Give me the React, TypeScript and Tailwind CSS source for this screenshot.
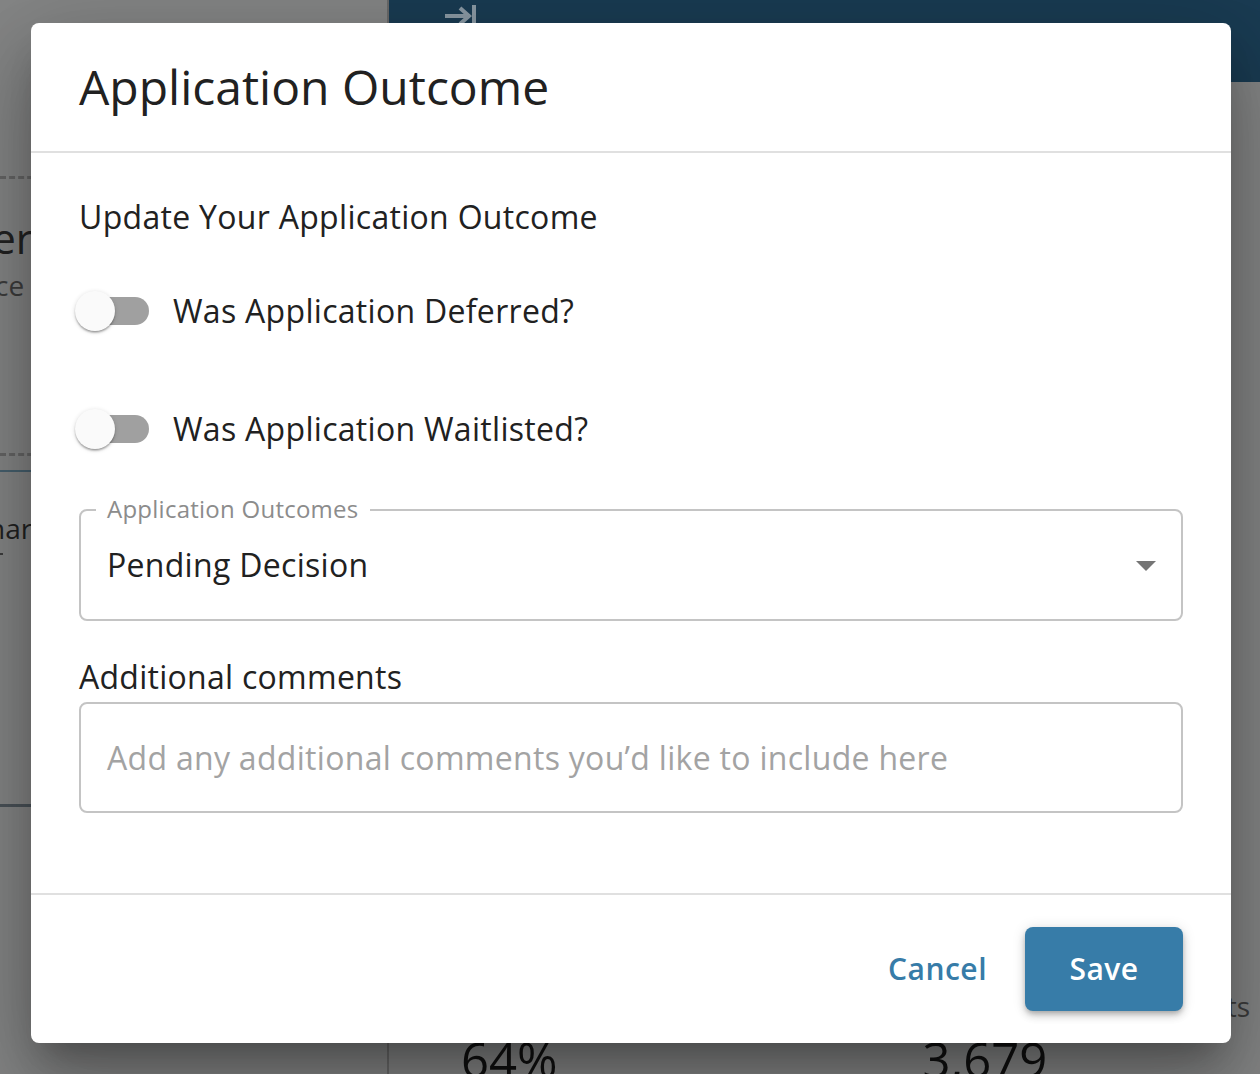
import React from "react";

function Toggle({ label }: { label: string }) {
  return (
    <div className="flex h-[40px] items-center">
      <div className="relative h-[28px] w-[71px] shrink-0 rounded-full bg-[#a0a0a0] ml-[-1px] mr-[24px]">
        <div className="absolute left-[-3px] top-[-6px] h-[40px] w-[40px] rounded-full bg-[#fafafa] shadow-[0_2px_2px_-1px_rgba(0,0,0,0.25),0_2px_2px_0_rgba(0,0,0,0.16),0_1px_5px_0_rgba(0,0,0,0.14)]" />
      </div>
      <span className="text-[32px] leading-[40px] tracking-[0.3px] text-[#212121]">{label}</span>
    </div>
  );
}

export default function App() {
  return (
    <div className="relative h-[1074px] w-[1260px] overflow-hidden bg-[#858686] font-['Open_Sans','Noto_Sans',sans-serif]">
      {/* page behind the modal */}
      <div className="flex h-full w-full">
        <div className="flex h-full w-[389px] shrink-0 flex-col overflow-hidden whitespace-nowrap border-r-2 border-[#6a6a6a]">
          <div className="mt-[176px] h-[3px] border-t-[3px] border-dashed border-[#666666]" />
          <div className="mt-[34px] ml-[-33px] text-[42px] leading-[50px] text-[#222222]">Per</div>
          <div className="mt-[4px] ml-[-12px] text-[28px] leading-[36px] text-[#3d3d3d]">ice</div>
          <div className="mt-[150px] h-[3px] border-t-[3px] border-dashed border-[#666666]" />
          <div className="mt-[14px] h-[2px] bg-[#47616f]" />
          <div className="mt-[38px] ml-[-12px] text-[28px] leading-[36px] text-[#222222]">har</div>
          <div className="mt-[7px] h-[2px] w-[3px] bg-[#3d3d3d]" />
          <div className="mt-[249px] h-[3px] bg-[#4b5359]" />
        </div>
        <div className="flex h-full min-w-0 flex-1 flex-col">
          <div className="flex h-[82px] shrink-0 items-start bg-[#1a3c53] pl-[55px] pt-[4px]">
            <svg width="33" height="24" viewBox="0 0 33 24" fill="none" stroke="#8c9ba6" strokeWidth="4">
              <path d="M1 12h24M16 4l9 8-9 8M30 1v22" />
            </svg>
          </div>
          <div className="flex-1" />
          <div className="flex h-[52px] shrink-0 justify-end pr-[10px] text-[28px] leading-[36px] text-[#3d3d3d]">
            <span>Results</span>
          </div>
          <div className="flex h-[34px] shrink-0 overflow-visible whitespace-nowrap text-[49px] leading-[38px] text-[#111111]">
            <span className="ml-[72px]">64%</span>
            <span className="ml-[365px]">3,679</span>
          </div>
        </div>
      </div>

      {/* modal */}
      <div className="absolute left-[31px] top-[23px] flex h-[1020px] w-[1200px] flex-col rounded-[8px] bg-white shadow-[0_22px_30px_-14px_rgba(0,0,0,0.25),0_48px_76px_6px_rgba(0,0,0,0.18),0_18px_92px_16px_rgba(0,0,0,0.16)]">
        <div className="flex h-[130px] shrink-0 items-center border-b-2 border-[#e0e0e0] px-[48px]">
          <h2 className="text-[48px] leading-[60px] text-[#212121]">Application Outcome</h2>
        </div>
        <div className="flex flex-1 flex-col px-[48px] pt-[43px]">
          <div className="text-[32px] leading-[42px] tracking-[0.3px] text-[#212121]">Update Your Application Outcome</div>
          <div className="mt-[53px]"><Toggle label="Was Application Deferred?" /></div>
          <div className="mt-[78px]"><Toggle label="Was Application Waitlisted?" /></div>
          <div className="relative mt-[60px] flex h-[112px] items-center rounded-[8px] border-2 border-[#c4c4c4] pl-[26px] pr-[24px]">
            <span className="absolute left-[15px] top-[-17px] bg-white px-[11px] text-[24px] leading-[30px] tracking-[0.25px] text-[#8c8c8c]">Application Outcomes</span>
            <span className="text-[32px] leading-[40px] tracking-[0.3px] text-[#212121]">Pending Decision</span>
            <svg className="ml-auto mt-[1px]" width="22" height="12" viewBox="0 0 22 12"><path d="M1 1h20L11 11z" fill="#757575" /></svg>
          </div>
          <div className="mt-[35px] text-[32px] leading-[42px] tracking-[0.27px] text-[#212121]">Additional comments</div>
          <div className="mt-[4px] flex h-[111px] items-center rounded-[8px] border-2 border-[#c4c4c4] pl-[26px]">
            <span className="text-[32px] leading-[40px] tracking-[0.3px] text-[#a3a3a3]">Add any additional comments you’d like to include here</span>
          </div>
        </div>
        <div className="flex h-[150px] shrink-0 items-center justify-end gap-[38px] border-t-2 border-[#e0e0e0] px-[48px]">
          <span className="text-[30px] font-[550] leading-[40px] tracking-[0.5px] text-[#377ca8] mt-[-1px]">Cancel</span>
          <div className="flex h-[84px] w-[158px] items-center justify-center rounded-[8px] bg-[#377ca8] text-[30px] font-[550] tracking-[0.5px] text-white shadow-[0_3px_5px_-1px_rgba(0,0,0,0.2),0_5px_8px_0_rgba(0,0,0,0.14),0_1px_14px_0_rgba(0,0,0,0.12)]"><span className="mt-[-2px]">Save</span></div>
        </div>
      </div>
    </div>
  );
}
